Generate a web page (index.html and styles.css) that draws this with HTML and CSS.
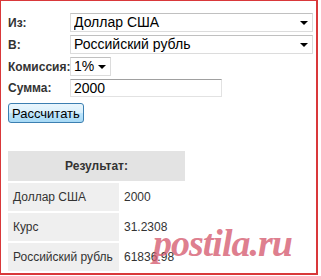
FILE: index.html
```html
<!DOCTYPE html>
<html lang="ru">
<head>
    <meta charset="UTF-8">
    <title>Конвертер валют</title>
    <link rel="stylesheet" href="styles.css">
</head>
<body>
    <div class="frame">
        <div class="form">
            <label class="lbl">Из:</label>
            <div class="sel wide">
                <select><option>Доллар США</option></select>
            </div>
            <label class="lbl">В:</label>
            <div class="sel wide">
                <select><option>Российский рубль</option></select>
            </div>
            <label class="lbl">Комиссия:</label>
            <div class="sel small">
                <select><option>1%</option></select>
            </div>
            <label class="lbl">Сумма:</label>
            <input class="sum" type="text" value="2000">
        </div>
        <button class="calc">Рассчитать</button>

        <table class="result">
            <tr><th colspan="2">Результат:</th></tr>
            <tr><td class="name">Доллар США</td><td>2000</td></tr>
            <tr><td class="name">Курс</td><td>31.2308</td></tr>
            <tr><td class="name">Российский рубль</td><td>61836.98</td></tr>
        </table>

        <!-- водяной знак -->
        <div class="mark">postila.ru</div>
    </div>
</body>
</html>
```

FILE: styles.css
```css
body {
    margin: 0;
    font-family: "Liberation Sans", Arial, sans-serif;
    color: #222;
    background: #fff;
}
.frame {
    position: relative;
    width: 318px;
    height: 275px;
    border: 1px solid #d9383a;
    border-right-width: 2px;
    border-bottom-width: 2px;
    padding: 8px 0 0 7px;
    box-sizing: border-box;
    overflow: hidden;
}
.form {
    display: grid;
    grid-template-columns: 62px auto;
    row-gap: 3px;
    align-items: center;
    margin-top: 4px;
}
.lbl {
    font-size: 12px;
    font-weight: bold;
    color: #333;
}
.sel {
    position: relative;
    justify-self: start;
}
.sel select {
    -webkit-appearance: none;
    appearance: none;
    font-family: "Liberation Sans", Arial, sans-serif;
    font-size: 14px;
    color: #000;
    height: 19px;
    padding: 0 0 0 3px;
    border: 1px solid #dcdcdc;
    border-top-color: #c0c0c0;
    background: #fff;
    border-radius: 0;
    width: 100%;
    line-height: 17px;
}
.sel::after {
    content: "";
    position: absolute;
    right: 5px;
    top: 8px;
    border-left: 4px solid transparent;
    border-right: 4px solid transparent;
    border-top: 4px solid #000;
    pointer-events: none;
}
.wide {
    width: 243px;
}
.small {
    width: 41px;
}
.sum {
    justify-self: start;
    width: 152px;
    height: 18px;
    box-sizing: border-box;
    font-family: "Liberation Sans", Arial, sans-serif;
    font-size: 14px;
    padding: 0 3px;
    border: 1px solid #e2e2e2;
    border-top-color: #a0a0a0;
}
.calc {
    display: block;
    margin-top: 6px;
    height: 20px;
    padding: 0 3px;
    font-family: "Liberation Sans", Arial, sans-serif;
    font-size: 13px;
    color: #000;
    border: 1px solid #3c7fb1;
    border-radius: 3px;
    background: linear-gradient(#eaf6fd, #d9f0fc 50%, #bee6fd 50%, #a7d9f5);
}
.result {
    margin-top: 26px;
    border-spacing: 0 2px;
    font-size: 12px;
    color: #333;
}
.result th {
    height: 28px;
    width: 175px;
    background: #e3e3e3;
    font-size: 12px;
}
.result td {
    height: 28px;
    padding: 0 6px 0 5px;
    white-space: nowrap;
}
.result td.name {
    background: #efefef;
    width: 100px;
}
.mark {
    position: absolute;
    left: 152px;
    top: 222px;
    font-family: "Liberation Serif", serif;
    font-style: italic;
    font-weight: bold;
    font-size: 38px;
    line-height: 40px;
    color: rgba(214, 92, 112, 0.8);
    letter-spacing: -1px;
}
```
